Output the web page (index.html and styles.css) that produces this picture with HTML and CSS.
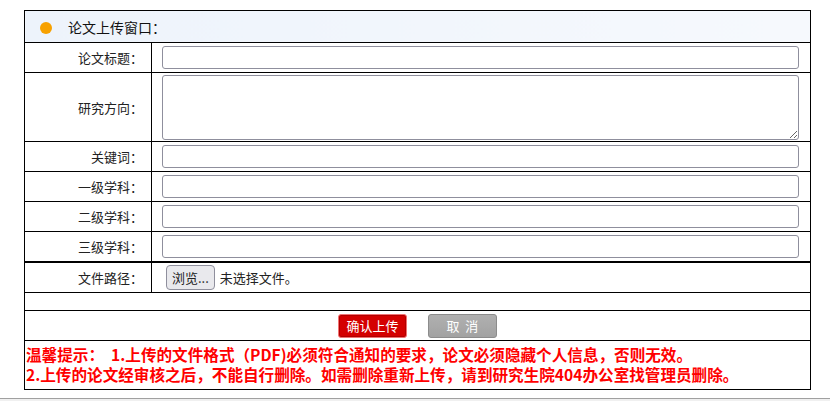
FILE: index.html
```html
<!DOCTYPE html>
<html lang="zh-CN">
<head>
    <meta charset="UTF-8">
    <title>论文上传</title>
    <link rel="stylesheet" href="styles.css">
</head>
<body>
    <table class="upload">
        <tr>
            <td colspan="2" class="head"><span class="dot"></span>论文上传窗口：</td>
        </tr>
        <tr>
            <td class="label">论文标题：</td>
            <td class="field"><input type="text"></td>
        </tr>
        <tr class="tall">
            <td class="label">研究方向：</td>
            <td class="field"><textarea></textarea></td>
        </tr>
        <tr>
            <td class="label">关键词：</td>
            <td class="field"><input type="text"></td>
        </tr>
        <tr>
            <td class="label">一级学科：</td>
            <td class="field"><input type="text"></td>
        </tr>
        <tr>
            <td class="label">二级学科：</td>
            <td class="field"><input type="text"></td>
        </tr>
        <tr>
            <td class="label">三级学科：</td>
            <td class="field"><input type="text"></td>
        </tr>
        <tr class="file-row">
            <td class="label">文件路径：</td>
            <td class="field"><span class="browse">浏览...</span><span class="nofile">未选择文件。</span></td>
        </tr>
        <tr class="blank">
            <td colspan="2"></td>
        </tr>
        <tr>
            <td colspan="2" class="buttons">
                <button class="ok">确认上传</button>
                <button class="cancel">取&nbsp;&nbsp;消</button>
            </td>
        </tr>
        <tr>
            <td colspan="2" class="tip">
                温馨提示：&nbsp;&nbsp;1.上传的文件格式（PDF)必须符合通知的要求，论文必须隐藏个人信息，否则无效。<br>
                2.上传的论文经审核之后，不能自行删除。如需删除重新上传，请到研究生院404办公室找管理员删除。
            </td>
        </tr>
    </table>
    <div class="scrollbar"></div>
</body>
</html>
```

FILE: styles.css
```css
body {
    margin: 0;
    padding: 10px 0 0 24px;
    font-family: "Noto Sans CJK SC", "DejaVu Sans", sans-serif;
    font-size: 13px;
    color: #222;
    background: #fff;
    height: 391px;
    overflow: hidden;
    position: relative;
}
.upload {
    width: 787px;
    border-collapse: collapse;
    border: 1px solid #000;
}
.upload td {
    border: 1px solid #000;
    padding: 0;
}
.head {
    height: 31px;
    background: linear-gradient(to right, #edf3fb, #f6f9fd);
    font-size: 14px;
    color: #111;
    padding-left: 15px !important;
}
.dot {
    display: inline-block;
    width: 12px;
    height: 12px;
    border-radius: 50%;
    background: #f7a100;
    margin-right: 16px;
    vertical-align: -1px;
}
.label {
    width: 118px;
    text-align: right;
    padding-right: 8px !important;
    height: 29px;
}
.field {
    padding: 0 11px 0 10px !important;
}
.field input {
    display: block;
    box-sizing: border-box;
    width: 100%;
    height: 23px;
    border: 1px solid #8f8f9d;
    border-radius: 3px;
    margin: 0;
}
.tall .label {
    height: 68px;
}
.field textarea {
    display: block;
    box-sizing: border-box;
    width: 100%;
    height: 65px;
    border: 1px solid #8f8f9d;
    border-radius: 3px;
    margin: 0;
    resize: vertical;
}
.file-row td {
    border-top-width: 2px;
}
.browse {
    display: inline-block;
    box-sizing: border-box;
    height: 25px;
    line-height: 23px;
    padding: 0 5px;
    margin: 0 5px 0 4px;
    border: 1px solid #8f8f9d;
    border-radius: 4px;
    background: #e9e9ed;
    vertical-align: middle;
}
.nofile {
    vertical-align: middle;
}
.blank td {
    height: 17px;
}
.buttons {
    height: 29px;
    text-align: center;
}
.buttons button {
    width: 69px;
    height: 24px;
    border-radius: 3px;
    font-family: inherit;
    font-size: 13px;
    color: #fff;
    padding: 0;
    vertical-align: middle;
    margin: 0 9px;
}
.ok {
    background: #d40000;
    border: 1px solid #f27272;
    box-shadow: inset 0 0 0 1px #b00000;
}
.cancel {
    background: linear-gradient(#b0b0b0, #a2a2a2);
    border: 1px solid #8c8c8c;
}
.tip {
    color: #f00;
    font-weight: bold;
    font-size: 15.6px;
    line-height: 20px;
    padding: 3px 0 5px 1px !important;
    white-space: nowrap;
}
.scrollbar {
    position: absolute;
    left: 0;
    right: 0;
    bottom: 0;
    height: 2px;
    border-top: 1px solid #a0a0a0;
    background: #f0f0f0;
}
```
